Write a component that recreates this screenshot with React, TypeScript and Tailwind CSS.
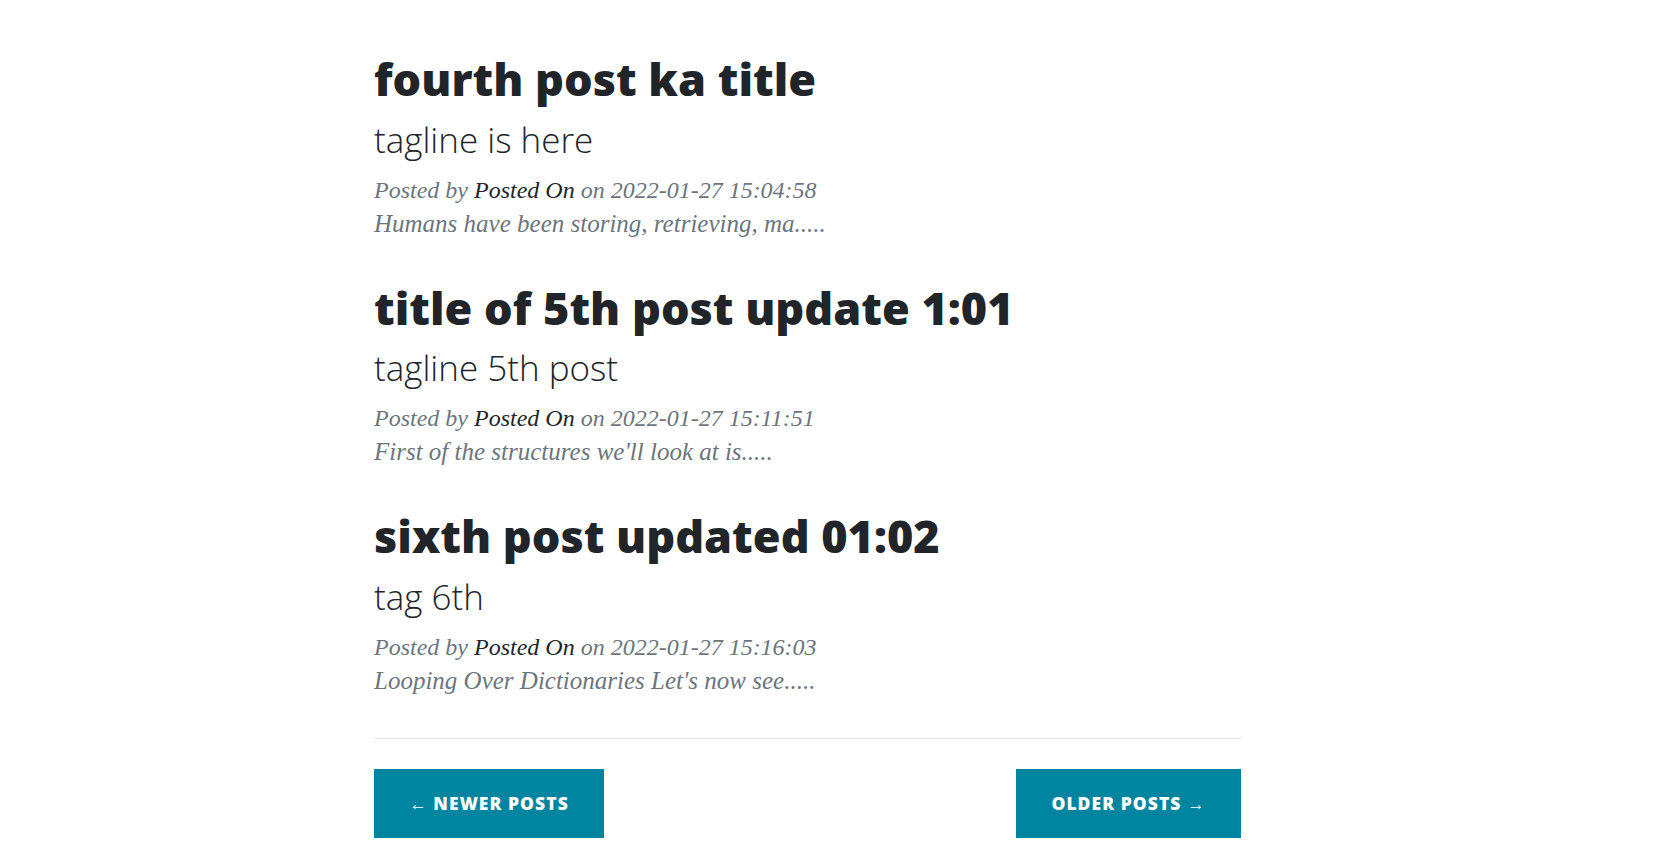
const posts = [
  {
    title: "fourth post ka title",
    subtitle: "tagline is here",
    date: "2022-01-27 15:04:58",
    excerpt: "Humans have been storing, retrieving, ma.....",
  },
  {
    title: "title of 5th post update 1:01",
    subtitle: "tagline 5th post",
    date: "2022-01-27 15:11:51",
    excerpt: "First of the structures we'll look at is.....",
  },
  {
    title: "sixth post updated 01:02",
    subtitle: "tag 6th",
    date: "2022-01-27 15:16:03",
    excerpt: "Looping Over Dictionaries Let's now see.....",
  },
];

function PostPreview(props: { title: string; subtitle: string; date: string; excerpt: string }) {
  return (
    <div className="pt-[40px]">
      <a href="#" className="block text-[#212529]">
        <h2 className="font-['Open_Sans',sans-serif] font-extrabold text-[45px] leading-[53px]">
          {props.title}
        </h2>
        <h3 className="mt-[13.5px] font-['Open_Sans',sans-serif] font-light text-[35px] leading-[42px]">
          {props.subtitle}
        </h3>
      </a>
      <p className="mt-[12px] font-['Liberation_Serif',serif] italic text-[24px] leading-[34px] text-[#6c757d]">
        Posted by <a href="#" className="text-[#212529]">Posted On</a> on {props.date}
      </p>
      <p className="font-['Liberation_Serif',serif] italic text-[25px] leading-[34px] text-[#6c757d]">
        {props.excerpt}
      </p>
    </div>
  );
}

export default function App() {
  return (
    <div className="min-h-screen bg-white pt-[12px]">
      <div className="ml-[374px] w-[867px]">
        {posts.map((p) => (
          <PostPreview key={p.title} {...p} />
        ))}
        <hr className="mt-[40px] border-t border-[#dee2e6]" />
        <div className="mt-[30px] flex justify-between">
          <a
            href="#"
            className="flex h-[69px] w-[230px] items-center justify-center bg-[#0085a1] font-['Open_Sans',sans-serif] text-[17.5px] font-extrabold uppercase tracking-[0.06em] text-white"
          >
            ← Newer Posts
          </a>
          <a
            href="#"
            className="flex h-[69px] w-[225px] items-center justify-center bg-[#0085a1] font-['Open_Sans',sans-serif] text-[17.5px] font-extrabold uppercase tracking-[0.06em] text-white"
          >
            Older Posts →
          </a>
        </div>
      </div>
    </div>
  );
}
